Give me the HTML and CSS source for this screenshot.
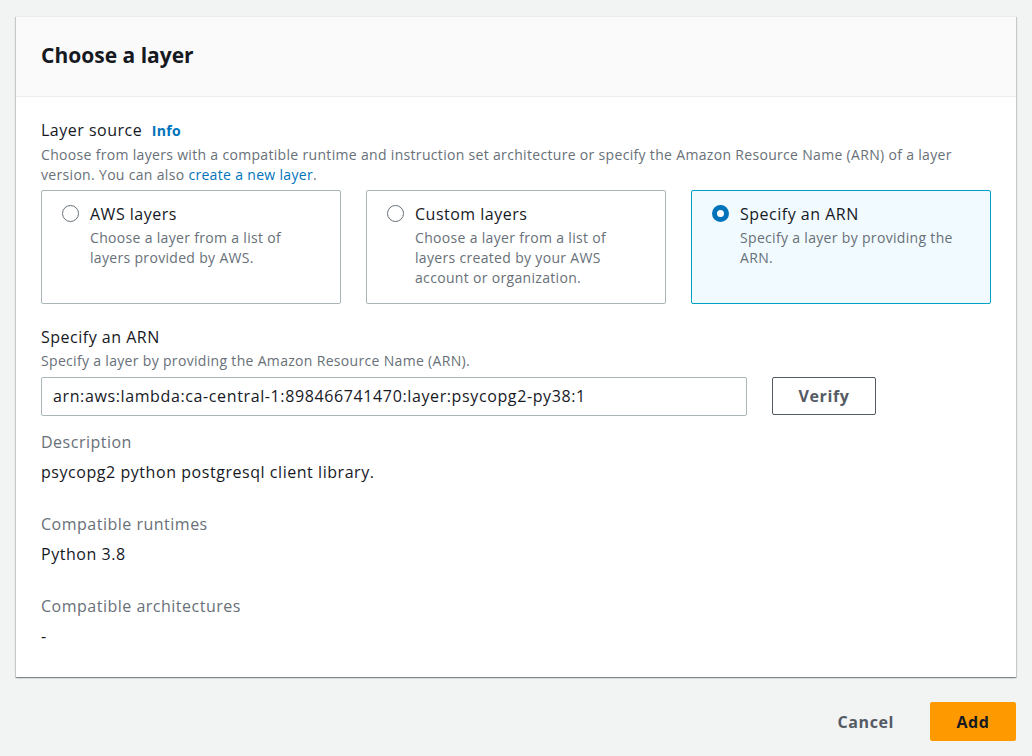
FILE: index.html
```html
<!DOCTYPE html>
<html>
<head>
<meta charset="utf-8">
<link rel="stylesheet" href="styles.css">
</head>
<body>
<div class="page">
  <div class="card">
    <div class="card-header"><h2>Choose a layer</h2></div>
    <div class="card-body">
      <div class="field">
        <div class="label">Layer source <a class="info">Info</a></div>
        <div class="hint">Choose from layers with a compatible runtime and instruction set architecture or specify the Amazon Resource Name (ARN) of a layer version. You can also <a class="link">create a new layer</a>.</div>
        <div class="tiles">
          <div class="tile">
            <span class="radio"></span>
            <div>
              <div class="tile-title">AWS layers</div>
              <div class="tile-desc">Choose a layer from a list of layers provided by AWS.</div>
            </div>
          </div>
          <div class="tile">
            <span class="radio"></span>
            <div>
              <div class="tile-title">Custom layers</div>
              <div class="tile-desc">Choose a layer from a list of layers created by your AWS account or organization.</div>
            </div>
          </div>
          <div class="tile selected">
            <span class="radio checked"></span>
            <div>
              <div class="tile-title">Specify an ARN</div>
              <div class="tile-desc">Specify a layer by providing the ARN.</div>
            </div>
          </div>
        </div>
      </div>
      <div class="field arn">
        <div class="label">Specify an ARN</div>
        <div class="hint">Specify a layer by providing the Amazon Resource Name (ARN).</div>
        <div class="input-row">
          <div class="input">arn:aws:lambda:ca-central-1:898466741470:layer:psycopg2-py38:1</div>
          <button class="btn-normal">Verify</button>
        </div>
      </div>
      <div class="kv">
        <div class="key">Description</div>
        <div class="val">psycopg2 python postgresql client library.</div>
      </div>
      <div class="kv">
        <div class="key">Compatible runtimes</div>
        <div class="val">Python 3.8</div>
      </div>
      <div class="kv">
        <div class="key">Compatible architectures</div>
        <div class="val">-</div>
      </div>
    </div>
  </div>
  <div class="actions">
    <button class="btn-link">Cancel</button>
    <button class="btn-primary">Add</button>
  </div>
</div>
</body>
</html>
```
FILE: styles.css
```css
* { box-sizing: border-box; }
html, body { margin: 0; padding: 0; }
body {
  background: #f2f3f3;
  font-family: "Open Sans", "Noto Sans", Arial, sans-serif;
  color: #16191f;
  width: 1032px;
  height: 756px;
  overflow: hidden;
}
.page { padding: 16px 16px 0 16px; }
.card {
  background: #fff;
  border-top: 1px solid #eaeded;
  box-shadow: 0 1px 1px 0 rgba(0,28,36,0.3), 1px 1px 1px 0 rgba(0,28,36,0.15), -1px 1px 1px 0 rgba(0,28,36,0.15);
}
.card-header {
  background: #fafafa;
  border-bottom: 1px solid #eaeded;
  height: 80px;
  padding: 24px 25px 0 25px;
}
.card-header h2 {
  margin: 0;
  font-size: 21px;
  line-height: 28px;
  font-weight: 700;
}
.card-body { padding: 21px 25px 29px 25px; }
.label {
  font-size: 16px;
  line-height: 24px;
  letter-spacing: 0.5px;
}
.info {
  font-size: 14px;
  font-weight: 700;
  color: #0073bb;
  margin-left: 5px;
  letter-spacing: 0.3px;
}
.hint {
  font-size: 14px;
  line-height: 20px;
  color: #687078;
  letter-spacing: 0.32px;
  margin-top: 2px;
}
.link { color: #0073bb; }
.tiles {
  display: grid;
  grid-template-columns: 300px 300px 300px;
  gap: 25px;
  margin-top: 5px;
}
.tile {
  height: 114px;
  border: 1px solid #aab7b8;
  border-radius: 2px;
  display: flex;
  gap: 11px;
  padding: 12px 20px;
}
.tile.selected {
  border-color: #00a1c9;
  background: #f1faff;
}
.radio {
  flex: none;
  width: 17px;
  height: 17px;
  border: 1.5px solid #687078;
  border-radius: 50%;
  margin-top: 2px;
  background: #fff;
}
.radio.checked {
  border: 5px solid #0073bb;
}
.tile-title { font-size: 16px; line-height: 22px; letter-spacing: 0.5px; }
.tile-desc { font-size: 14px; line-height: 20px; color: #687078; margin-top: 3px; letter-spacing: 0.32px; }
.arn { margin-top: 21px; }
.arn .hint { margin-top: 2px; }
.input-row { display: flex; align-items: flex-start; gap: 25px; margin-top: 6px; }
.input {
  width: 706px;
  height: 39px;
  border: 1px solid #aab7b8;
  border-radius: 2px;
  padding: 0 11px;
  font-size: 16px;
  line-height: 37px;
  letter-spacing: 0.62px;
}
.btn-normal {
  width: 104px;
  height: 38px;
  border: 1px solid #545b64;
  border-radius: 2px;
  background: #fff;
  font-family: inherit;
  font-size: 16px;
  font-weight: 700;
  color: #545b64;
  letter-spacing: 0.6px;
}
.kv { margin-top: 14px; }
.kv + .kv { margin-top: 28px; }
.key { font-size: 16px; line-height: 24px; color: #687078; letter-spacing: 0.5px; }
.val { font-size: 16px; line-height: 24px; margin-top: 6px; letter-spacing: 0.55px; }
.actions {
  display: flex;
  justify-content: flex-end;
  gap: 16px;
  margin-top: 25px;
}
.btn-link {
  background: none;
  border: none;
  font-family: inherit;
  font-size: 16px;
  font-weight: 700;
  color: #545b64;
  padding: 0 20px;
  height: 39px;
  letter-spacing: 0.6px;
}
.btn-primary {
  width: 86px;
  height: 39px;
  background: #ff9900;
  border: 1px solid #ff9900;
  border-radius: 2px;
  font-family: inherit;
  font-size: 16px;
  font-weight: 700;
  color: #16191f;
  letter-spacing: 0.6px;
}
```
